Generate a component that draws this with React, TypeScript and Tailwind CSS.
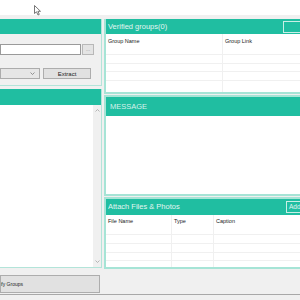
import React from 'react';

const teal = 'bg-[#20bea1]';

// Small gray arrow glyph for the list scrollbar
function ScrollArrow({ down }: { down?: boolean }) {
  return (
    <svg width="5" height="3" viewBox="0 0 5 3" className="block">
      <path d={down ? 'M0.5 0.5 L2.5 2.5 L4.5 0.5' : 'M0.5 2.5 L2.5 0.5 L4.5 2.5'} fill="none" stroke="#a6a6a6" strokeWidth="0.8" />
    </svg>
  );
}

function TableLines({ rows }: { rows: number[] }) {
  return (
    <>
      {rows.map((h, i) => (
        <div key={i} className="border-b border-[#f0f0f0]" style={{ height: h }} />
      ))}
    </>
  );
}

export default function App() {
  return (
    <div
      className="relative w-[300px] h-[300px] overflow-hidden bg-[#f0f0f0] flex flex-col"
      style={{ fontFamily: '"Liberation Sans", Arial, sans-serif' }}
    >
      {/* Title strip */}
      <div className="h-[15px] bg-white shrink-0" />

      <div className="flex gap-[2px] pt-[4px] h-[278px] shrink-0">
        {/* Left column */}
        <div className="w-[102px] shrink-0 flex flex-col">
          {/* Source panel */}
          <div className="h-[67px] border-r border-b border-[#b3e4d9] flex flex-col">
            <div className={`h-[15px] ${teal}`} />
            <div className="flex mt-[10px] h-[11px] gap-[1px]">
              <div className="w-[81px] bg-white border border-[#9a9a9a]" />
              <div className="w-[12px] bg-[#e4e4e4] border border-[#b8b8b8] flex items-center justify-center text-[5px] leading-none text-[#8a8a8a]">
                ...
              </div>
            </div>
            <div className="flex mt-[13px] h-[11px]">
              <div className="w-[40px] bg-[#e6e6e6] border border-[#acacac] flex items-center justify-end pr-[4px]">
                <svg width="5" height="3" viewBox="0 0 5 3">
                  <path d="M0.5 0.5 L2.5 2.5 L4.5 0.5" fill="none" stroke="#6d6d6d" strokeWidth="0.7" />
                </svg>
              </div>
              <div className="ml-[3px] w-[48px] bg-[#e1e1e1] border border-[#adadad] flex items-center justify-center text-[6px] leading-none text-[#222]">
                Extract
              </div>
            </div>
          </div>

          {/* Group list panel */}
          <div className="mt-[3px] h-[179px] border-r border-b border-[#b3e4d9] flex flex-col">
            <div className={`h-[16px] ${teal}`} />
            <div className="flex-1 bg-white flex justify-end">
              <div className="w-[8px] bg-[#f0f0f0] flex flex-col items-center justify-between py-[4px]">
                <ScrollArrow />
                <ScrollArrow down />
              </div>
            </div>
          </div>

          {/* Verify button (its left part lies beyond the window edge) */}
          <div className="mt-[7px] h-[18px] w-[100px] bg-[#e1e1e1] border border-[#adadad] overflow-hidden flex items-center justify-end pr-[76px]">
            <span className="text-[5px] leading-none text-[#222] whitespace-nowrap">Verify Groups</span>
          </div>
        </div>

        {/* Right column */}
        <div className="w-[210px] shrink-0 flex flex-col">
          {/* Verified groups */}
          <div className="h-[75px] border-x-2 border-b-2 border-[#a6e4d6] flex flex-col">
            <div className={`h-[15px] ${teal} flex items-center pl-[2px]`}>
              <span className="text-[7.5px] leading-none text-[#e2f6f1] whitespace-nowrap">Verified groups(0)</span>
              <div className="ml-auto w-[29px] h-[12px] mt-[1px] border border-[#c9efe6]" />
            </div>
            <div className="flex-1 bg-white flex text-[5.5px] leading-none text-[#222]">
              <div className="w-[117px] border-r border-[#f0f0f0] flex flex-col">
                <div className="h-[21px] border-b border-[#f0f0f0] pl-[2px] pt-[5px]">Group Name</div>
                <TableLines rows={[9, 8, 9]} />
              </div>
              <div className="flex-1 flex flex-col">
                <div className="h-[21px] border-b border-[#f0f0f0] pl-[2px] pt-[5px]">Group Link</div>
                <TableLines rows={[9, 8, 9]} />
              </div>
            </div>
          </div>

          {/* Message */}
          <div className="mt-[1px] h-[101px] border-2 border-[#a6e4d6] flex flex-col">
            <div className={`h-[19px] ${teal} pl-[4px] pt-[6px]`}>
              <span className="block text-[7.5px] leading-none text-[#d6f2eb]">MESSAGE</span>
            </div>
            <div className="flex-1 bg-white" />
          </div>

          {/* Attachments */}
          <div className="mt-[1px] h-[72px] border-2 border-[#a6e4d6] flex flex-col">
            <div className={`h-[16px] ${teal} flex items-center pl-[2px]`}>
              <span className="text-[7.5px] leading-none text-[#e2f6f1] whitespace-nowrap">Attach Files &amp; Photos</span>
              <div className="ml-auto w-[26px] h-[12px] border border-[#c9efe6] flex items-center pl-[2px] text-[6.5px] leading-none text-[#e2f6f1]">
                Add
              </div>
            </div>
            <div className="flex-1 bg-white flex text-[5.5px] leading-none text-[#222]">
              <div className="w-[66px] border-r border-[#f0f0f0] flex flex-col">
                <div className="h-[20px] border-b border-[#f0f0f0] pl-[2px] pt-[4px]">File Name</div>
                <TableLines rows={[9, 9, 8]} />
              </div>
              <div className="w-[42px] border-r border-[#f0f0f0] flex flex-col">
                <div className="h-[20px] border-b border-[#f0f0f0] pl-[2px] pt-[4px]">Type</div>
                <TableLines rows={[9, 9, 8]} />
              </div>
              <div className="flex-1 flex flex-col">
                <div className="h-[20px] border-b border-[#f0f0f0] pl-[2px] pt-[4px]">Caption</div>
                <TableLines rows={[9, 9, 8]} />
              </div>
            </div>
          </div>
        </div>
      </div>

      {/* Bottom edge */}
      <div className="h-[1px] bg-[#a8a8a8] mt-[1px] shrink-0" />

      {/* Mouse cursor */}
      <svg className="absolute left-[34px] top-[5px]" width="8" height="11" viewBox="0 0 8 11">
        <path d="M0.5 0.5 L0.5 8.5 L2.5 6.8 L4 10 L5.3 9.4 L3.9 6.3 L6.5 6.3 Z" fill="#fff" stroke="#555" strokeWidth="0.8" strokeLinejoin="round" />
      </svg>
    </div>
  );
}
